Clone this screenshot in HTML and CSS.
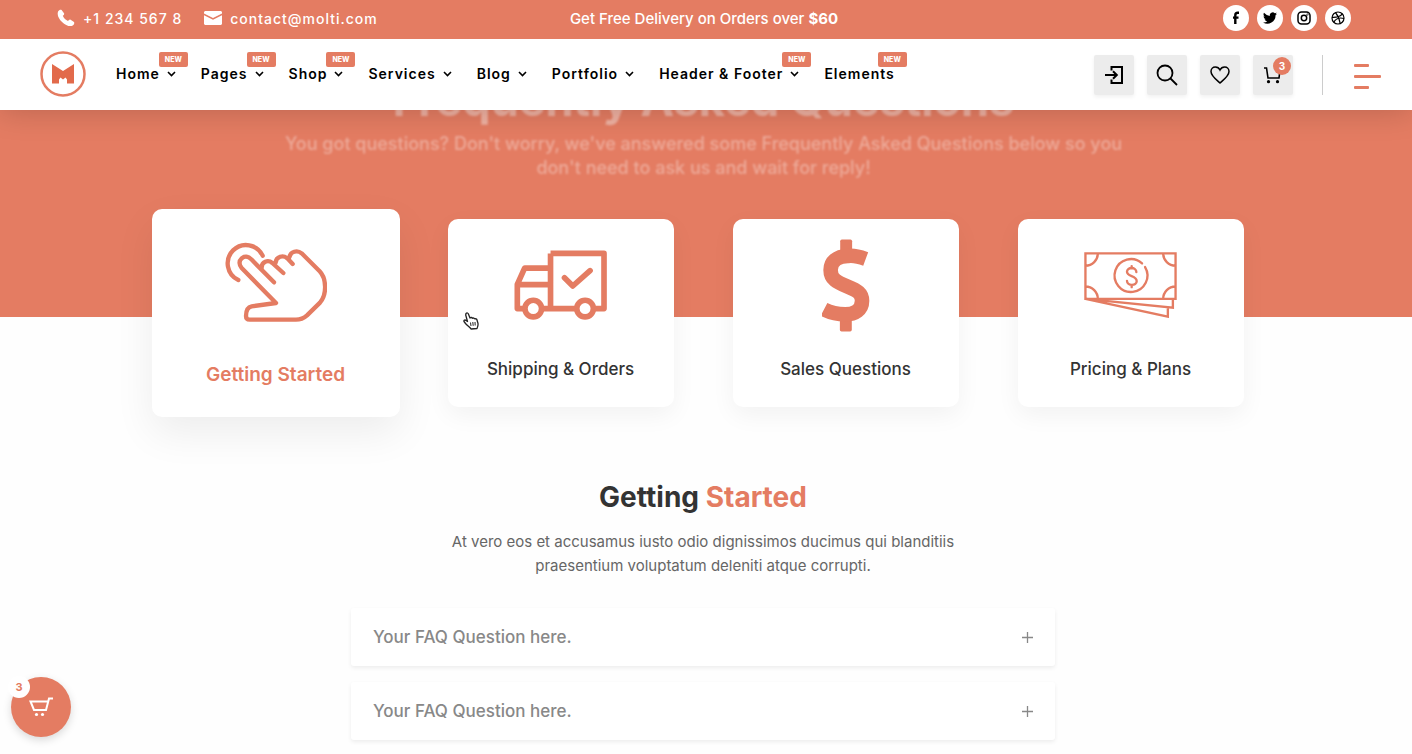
FILE: index.html
```html
<!DOCTYPE html>
<html lang="en">
<head>
    <meta charset="UTF-8">
    <meta name="viewport" content="width=device-width, initial-scale=1">
    <title>Molti - FAQ</title>
    <link rel="stylesheet" href="styles.css">
</head>
<body>
<header class="site-header">
    <div class="topbar">
        <div class="contact">
            <a href="tel:+12345678">
                <svg width="18" height="18" viewBox="0 0 18 18"><path d="M1.200 2.200C2 1 3.500.2 4.600.9L7 4.300c.5.900-.1 1.700-1.200 2.500 1 2.300 3 4.300 5.200 5.200.8-1.100 1.700-1.700 2.600-1.200l3.400 2.300c.7 1-.1 2.700-1.300 3.500C10 19.500-2 9 1.200 2.200z" fill="#fff"/></svg>
                <span>+1 234 567 8</span>
            </a>
            <a href="mailto:contact@molti.com">
                <svg width="18" height="14" viewBox="0 0 18 14"><path d="M1 0h16l1 1v1.500L9 7 0 2.500V1z" fill="#fff"/><path d="M0 4.300 9 8.800l9-4.500V13l-1 1H1l-1-1z" fill="#fff"/></svg>
                <span>contact@molti.com</span>
            </a>
        </div>
        <p class="promo">Get Free Delivery on Orders over <b>$60</b></p>
        <div class="social">
            <a href="#" aria-label="Facebook">
                <svg width="14" height="14" viewBox="0 0 14 14"><path d="M10 1.700H8.800C7 1.700 6.300 2.600 6.300 4.200V13M4 6.600h5.500" fill="none" stroke="#000" stroke-width="2.400"/></svg>
            </a>
            <a href="#" aria-label="Twitter">
                <svg width="14" height="14" viewBox="0 0 24 24"><path d="M24 4.600a10 10 0 0 1-2.800.8 5 5 0 0 0 2.100-2.700 10 10 0 0 1-3.100 1.200 4.900 4.900 0 0 0-8.400 4.500A14 14 0 0 1 1.700 3.200a4.900 4.900 0 0 0 1.500 6.500A5 5 0 0 1 1 9.100a4.900 4.900 0 0 0 3.900 4.900 5 5 0 0 1-2.200.1 4.900 4.900 0 0 0 4.600 3.400A10 10 0 0 1 0 19.500 14 14 0 0 0 21.500 7.100 10 10 0 0 0 24 4.600z"/></svg>
            </a>
            <a href="#" aria-label="Instagram">
                <svg width="14" height="14" viewBox="0 0 14 14" fill="none" stroke="#000" stroke-width="1.500"><rect x="1" y="1" width="12" height="12" rx="3.500"/><circle cx="7" cy="7" r="2.700"/><circle cx="10.500" cy="3.500" r=".3"/></svg>
            </a>
            <a href="#" aria-label="Dribbble">
                <svg width="14" height="14" viewBox="0 0 14 14" fill="none" stroke="#000" stroke-width="1.200"><circle cx="7" cy="7" r="6"/><path d="M4.500 1.600c2.500 3 4 6.500 4.700 11M1 6.300c4.500.2 8.200-.8 10.300-3.500M2.800 11.300c2-3.800 5.800-5 10.200-3.800"/></svg>
            </a>
        </div>
    </div>
    <div class="menubar">
        <a href="#" class="logo" aria-label="Molti">
            <svg width="46" height="46" viewBox="0 0 46 46"><circle cx="23" cy="23" r="21.500" fill="none" stroke="#e47c62" stroke-width="2.500"/><path d="M12 13 23 20l11-7V32.500h-7v-4l-1.500-2-2.500 2-2.500-2-1.500 2v4h-7z" fill="#e26a4b"/></svg>
        </a>
        <nav>
            <a href="#">Home<svg class="arrow" viewBox="0 0 9 6"><path d="M1 1l3.500 3.500L8 1"/></svg><i class="new">NEW</i></a>
            <a href="#">Pages<svg class="arrow" viewBox="0 0 9 6"><path d="M1 1l3.500 3.500L8 1"/></svg><i class="new">NEW</i></a>
            <a href="#">Shop<svg class="arrow" viewBox="0 0 9 6"><path d="M1 1l3.500 3.500L8 1"/></svg><i class="new">NEW</i></a>
            <a href="#">Services<svg class="arrow" viewBox="0 0 9 6"><path d="M1 1l3.500 3.500L8 1"/></svg></a>
            <a href="#">Blog<svg class="arrow" viewBox="0 0 9 6"><path d="M1 1l3.500 3.500L8 1"/></svg></a>
            <a href="#">Portfolio<svg class="arrow" viewBox="0 0 9 6"><path d="M1 1l3.500 3.500L8 1"/></svg></a>
            <a href="#">Header &amp; Footer<svg class="arrow" viewBox="0 0 9 6"><path d="M1 1l3.500 3.500L8 1"/></svg><i class="new">NEW</i></a>
            <a href="#">Elements<i class="new">NEW</i></a>
        </nav>
        <div class="tools">
            <button type="button" aria-label="Log in">
                <svg width="20" height="20" viewBox="0 0 20 20" fill="none" stroke="#000" stroke-width="2"><path d="M7.500 5.500V2H18v16H7.500v-3.500M1 10h11.500M9 6.300l3.800 3.700L9 13.700"/></svg>
            </button>
            <button type="button" aria-label="Search">
                <svg width="22" height="22" viewBox="0 0 22 22" fill="none" stroke="#000" stroke-width="1.800"><circle cx="9" cy="9" r="7.500"/><path d="M14.500 14.500 21 21"/></svg>
            </button>
            <button type="button" aria-label="Wishlist">
                <svg width="20" height="18" viewBox="0 0 20 18" fill="none" stroke="#000" stroke-width="1.500"><path d="M10 17C7 14.200 1 10 1 5.500 1 2.800 3 1 5.300 1 7.500 1 9.200 2.300 10 4c.8-1.700 2.500-3 4.700-3C17 1 19 2.800 19 5.500 19 10 13 14.200 10 17z"/></svg>
            </button>
            <button type="button" aria-label="Cart">
                <svg width="18" height="18" viewBox="0 0 18 18"><path d="M0 2h2.500l1.500 10H15l1-8M3 8.500h1" fill="none" stroke="#000" stroke-width="1.600"/><circle cx="4.500" cy="15.700" r="1.600"/><circle cx="13.500" cy="15.700" r="1.600"/></svg>
                <span class="count">3</span>
            </button>
        </div>
        <button type="button" class="burger" aria-label="Menu"><span></span><span></span><span></span></button>
    </div>
</header>

<main>
    <section class="hero">
        <h1>Frequently Asked Questions</h1>
        <p>You got questions? Don't worry, we've answered some Frequently Asked Questions below so you don't need to ask us and wait for reply!</p>
    </section>

    <section class="cards">
        <a href="#" class="card cur">
            <svg class="hand" viewBox="0 0 306 240" fill="none" stroke="#e47c62" stroke-width="13" stroke-linecap="round" stroke-linejoin="round">
                <path d="M113 41A55 55 0 1 0 40 114"/>
                <path d="M147 121 79 52C70 42 58 42 50 49 41 57 42 69 50 78L153 183 80 193C69 195 63 207 63 222 63 229 67 233 74 233H213C226 233 237 228 246 220L285 182C306 158 305 110 284 88L230 34C217 23 196 28 193 46"/>
                <path d="M110 78C109 59 129 52 142 63L175 93M152 62C153 43 175 38 187 49L203 66"/>
            </svg>
            <h3>Getting Started</h3>
        </a>
        <a href="#" class="card">
            <svg class="truck" viewBox="0 0 280 208" fill="none" stroke="#e47c62" stroke-width="17" stroke-linejoin="round">
                <path d="M110 9H271V175H10V102L32 53H110M10 103H110M110 9V175"/>
                <path d="M152 82l25 25 52-46" stroke-linecap="round"/>
                <circle cx="58" cy="175" r="25" fill="#fff"/>
                <circle cx="214" cy="175" r="25" fill="#fff"/>
            </svg>
            <h3>Shipping &amp; Orders</h3>
            <svg class="pointer" width="16" height="18" viewBox="0 0 16 18" fill="#fff" stroke="#222" stroke-width="1.300" stroke-linejoin="round">
                <path d="M3 1.500C4 .5 5 1 5.400 2L7 6c.7-.8 2-.6 2.400.3.8-.6 2-.3 2.300.6 1-.4 2 .1 2.300 1.100l1 3.500c.3 2-.5 3.500-1 5L8 17c-1-2-3.500-3-5.500-5.500L1 9.500C.6 8.200 2 7.500 3 8.500l1.500 1L2.700 3z"/>
                <path d="M7.500 10.500l.5 3.500M9.800 10l.4 3.800M12 10l.2 3.500" stroke-width="1"/>
            </svg>
        </a>
        <a href="#" class="card">
            <svg class="dollar" viewBox="0 0 145 278" fill="none" stroke="#e47c62" stroke-width="44">
                <rect x="55" y="0" width="36" height="45" rx="5" fill="#e47c62" stroke="none"/>
                <rect x="54" y="233" width="36" height="45" rx="5" fill="#e47c62" stroke="none"/>
                <path d="M132 59C110 51 92 48 78 50 44 51 26 68 26 92 26 120 45 129 75 141 108 154 121 163 121 185 121 212 100 226 70 226 49 226 27 222 6 211"/>
            </svg>
            <h3>Sales Questions</h3>
        </a>
        <a href="#" class="card">
            <svg class="money" viewBox="0 0 277 197" fill="none" stroke="#e47c62" stroke-width="7">
                <path d="M4 4H273V140H4ZM41 4A37 37 0 0 1 4 41M236 4A37 37 0 0 0 273 41M4 103A37 37 0 0 1 41 140M273 103A37 37 0 0 0 236 140"/>
                <path d="M4 140 265 166V140M4 140 250 193V166"/>
                <path d="M173 34A49 49 0 1 0 182 45" stroke-linecap="round"/>
                <path d="M156 60C156 44 128 44 128 59 128 75 157 69 157 87 157 102 128 102 128 86M142 42V49M142 98V105" stroke-linecap="round"/>
            </svg>
            <h3>Pricing &amp; Plans</h3>
        </a>
    </section>

    <section class="faq">
        <h2>Getting <span>Started</span></h2>
        <p>At vero eos et accusamus iusto odio dignissimos ducimus qui blanditiis praesentium voluptatum deleniti atque corrupti.</p>
        <div class="list">
            <button type="button" class="item">Your FAQ Question here.<svg width="11" height="11" viewBox="0 0 11 11"><path d="M5.500 0v11M0 5.500h11"/></svg></button>
            <button type="button" class="item">Your FAQ Question here.<svg width="11" height="11" viewBox="0 0 11 11"><path d="M5.500 0v11M0 5.500h11"/></svg></button>
        </div>
    </section>
</main>

<button type="button" class="float-cart" aria-label="Open cart">
    <svg width="24" height="20" viewBox="0 0 24 20"><path d="M24 1.500h-4L17 13H5L1.500 4.500H19" fill="none" stroke="#fff" stroke-width="2"/><circle cx="7.500" cy="17.500" r="1.600" fill="#fff"/><circle cx="13.500" cy="17.500" r="1.600" fill="#fff"/></svg>
    <span>3</span>
</button>
</body>
</html>
```
FILE: styles.css
```css
*{
    box-sizing: border-box;
}
body,h1,h2,h3,p{
    margin: 0;
}
body{
    font-family: Inter, "Open Sans", sans-serif;
    color: #333;
    background-color: #fefefe;
}
a{
    color: inherit;
    text-decoration: none;
}
button{
    padding: 0;
    border: 0;
    font-family: inherit;
    cursor: pointer;
}
svg{
    display: block;
    flex-shrink: 0;
}

/* header */
.site-header{
    position: fixed;
    top: 0;
    left: 0;
    right: 0;
    z-index: 10;
    box-shadow: 0 0 30px rgba(0,0,0,.2);
}
.topbar{
    display: grid;
    grid-template-columns: 1fr auto 1fr;
    align-items: center;
    height: 39px;
    padding: 0 61px 3px 57px;
    background-color: #e47c62;
    color: #fff;
}
.contact{
    display: flex;
    gap: 22px;
    font-size: 14px;
    font-weight: 500;
    letter-spacing: 1px;
}
.contact a{
    display: flex;
    align-items: center;
    gap: 8px;
}
.promo{
    font-size: 15px;
    font-weight: 500;
}
.social{
    display: flex;
    justify-content: flex-end;
    gap: 8px;
}
.social a{
    display: flex;
    align-items: center;
    justify-content: center;
    width: 26px;
    height: 26px;
    border-radius: 50%;
    background-color: #fff;
}
.menubar{
    display: flex;
    align-items: center;
    height: 71px;
    padding: 0 31px 2px 40px;
    background-color: #fff;
}
nav{
    display: flex;
    gap: 25px;
    margin-left: 30px;
    font-size: 14px;
    font-weight: 600;
    letter-spacing: 1px;
    color: #000;
}
nav a{
    position: relative;
    display: flex;
    align-items: center;
    gap: 7px;
    white-space: nowrap;
}
.arrow{
    width: 9px;
    height: 6px;
    fill: none;
    stroke: #000;
    stroke-width: 1.6;
}
.new{
    position: absolute;
    right: -12px;
    bottom: 15px;
    width: 29px;
    border-radius: 2px;
    background-color: #e47c62;
    color: #fff;
    font-size: 7px;
    font-style: normal;
    font-weight: 800;
    line-height: 15px;
    letter-spacing: 0;
    text-align: center;
}
.tools{
    display: flex;
    gap: 13px;
    margin-left: auto;
    padding-right: 29px;
    border-right: 1px solid #ccc;
}
.tools button{
    position: relative;
    display: flex;
    align-items: center;
    justify-content: center;
    width: 40px;
    height: 40px;
    border-radius: 2px;
    background-color: #ececec;
    box-shadow: 0 2px 4px rgba(0,0,0,.06);
}
.count{
    position: absolute;
    top: 2px;
    right: 2px;
    width: 18px;
    border-radius: 50%;
    background-color: #e47c62;
    color: #fff;
    font-size: 10px;
    font-weight: 700;
    line-height: 18px;
}
.tools,
.burger{
    margin-top: 2px;
}
.burger{
    display: flex;
    flex-direction: column;
    gap: 8px;
    width: 27px;
    margin-left: 31px;
    padding-top: 3px;
    background: none;
}
.burger span{
    width: 15px;
    height: 3px;
    border-radius: 1px;
    background-color: #e47c62;
}
.burger span:nth-child(2){
    width: 27px;
}

/* hero */
.hero{
    height: 317px;
    padding: 76px 5px 0 0;
    background-color: #e47c62;
    color: #fff;
    text-align: center;
}
.hero h1{
    font-size: 45px;
    line-height: 48px;
    opacity: .4;
    filter: blur(1px);
}
.hero p{
    max-width: 850px;
    margin: 8px auto 0;
    font-size: 18px;
    font-weight: 500;
    line-height: 24px;
    opacity: .35;
    filter: blur(1px);
}

/* cards */
.cards{
    display: grid;
    grid-template-columns: repeat(4, 1fr);
    gap: 59px;
    max-width: 1081px;
    margin: -98px auto 0;
}
.card{
    position: relative;
    display: flex;
    flex-direction: column;
    align-items: center;
    padding: 19px 10px 26px;
    border-radius: 10px;
    background-color: #fff;
    box-shadow: 0 8px 24px rgba(0,0,0,.05);
}
.card svg{
    margin: auto 0;
}
.card h3{
    margin-top: 25px;
    font-size: 17px;
    font-weight: 500;
    line-height: 24px;
}
.card.cur{
    margin: -10px -11px;
    padding: 33px 10px 29px;
    color: #e47c62;
    box-shadow: 0 16px 40px rgba(0,0,0,.07);
}
.card.cur h3{
    margin-top: 40px;
    font-size: 19px;
    font-weight: 600;
    line-height: 26px;
}
.hand{
    width: 102px;
    height: 80px;
}
.truck{
    width: 93px;
    height: 70px;
}
.dollar{
    width: 48px;
    height: 93px;
}
.money{
    width: 93px;
    height: 66px;
}
.card .pointer{
    position: absolute;
    left: 15px;
    top: 93px;
    margin: 0;
}

/* faq */
.faq{
    max-width: 704px;
    margin: 72px auto 0;
    text-align: center;
}
main{
    padding-bottom: 8px;
}
.cards,
.faq{
    position: relative;
    right: 3px;
}
.faq h2{
    font-size: 28px;
    line-height: 36px;
}
.faq h2 span{
    color: #e47c62;
}
.faq p{
    max-width: 530px;
    margin: 15px auto 0;
    color: #666;
    font-size: 15px;
    line-height: 24px;
}
.list{
    display: flex;
    flex-direction: column;
    gap: 16px;
    margin-top: 30px;
}
.item{
    display: flex;
    align-items: center;
    justify-content: space-between;
    height: 58px;
    padding: 0 22px;
    border-radius: 3px;
    background-color: #fff;
    box-shadow: 0 2px 4px rgba(0,0,0,.07);
    color: #888;
    font-size: 17px;
    font-weight: 500;
}
.item path{
    stroke: #888;
    stroke-width: 1.3;
}

/* floating cart */
.float-cart{
    position: fixed;
    left: 11px;
    bottom: 17px;
    display: flex;
    align-items: center;
    justify-content: center;
    width: 60px;
    height: 60px;
    border-radius: 50%;
    background-color: #e47c62;
    box-shadow: 0 3px 8px rgba(0,0,0,.15);
}
.float-cart span{
    position: absolute;
    top: -1px;
    left: -3px;
    width: 22px;
    border-radius: 50%;
    background-color: #fff;
    color: #e47c62;
    font-size: 11px;
    font-weight: 700;
    line-height: 22px;
}
```
